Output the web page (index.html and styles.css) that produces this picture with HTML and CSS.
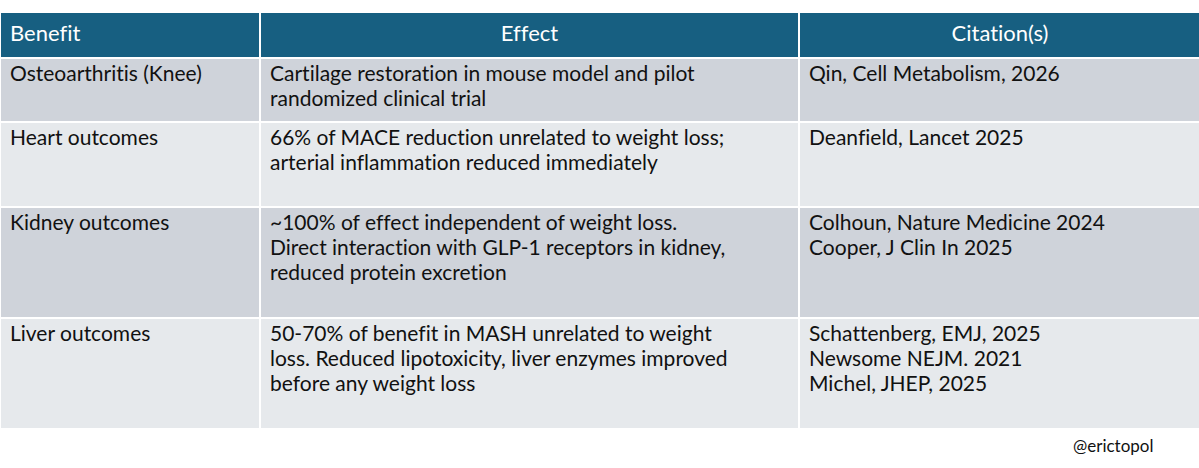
FILE: index.html
```html
<!DOCTYPE html>
<html>
<head>
<meta charset="utf-8">
<link rel="stylesheet" href="styles.css">
</head>
<body>
<div class="table">
  <div class="cell head left">Benefit</div>
  <div class="cell head">Effect</div>
  <div class="cell head">Citation(s)</div>

  <div class="cell dark">Osteoarthritis (Knee)</div>
  <div class="cell dark">Cartilage restoration in mouse model and pilot<br>randomized clinical trial</div>
  <div class="cell dark">Qin, Cell Metabolism, 2026</div>

  <div class="cell light">Heart outcomes</div>
  <div class="cell light">66% of MACE reduction unrelated to weight loss;<br>arterial inflammation reduced immediately</div>
  <div class="cell light">Deanfield, Lancet 2025</div>

  <div class="cell dark">Kidney outcomes</div>
  <div class="cell dark">~100% of effect independent of weight loss.<br>Direct interaction with GLP-1 receptors in kidney,<br>reduced protein excretion</div>
  <div class="cell dark">Colhoun, Nature Medicine 2024<br>Cooper, J Clin In 2025</div>

  <div class="cell light">Liver outcomes</div>
  <div class="cell light">50-70% of benefit in MASH unrelated to weight<br>loss. Reduced lipotoxicity, liver enzymes improved<br>before any weight loss</div>
  <div class="cell light">Schattenberg, EMJ, 2025<br>Newsome NEJM. 2021<br>Michel, JHEP, 2025</div>
</div>
<div class="credit">@erictopol</div>
</body>
</html>
```

FILE: styles.css
```css
html, body {
  margin: 0;
  padding: 0;
  background: #ffffff;
}
body {
  font-family: Lato, "Open Sans", sans-serif;
  font-variant-ligatures: none;
  font-feature-settings: "liga" 0, "dlig" 0;
  color: #111111;
  width: 1199px;
  height: 468px;
  overflow: hidden;
}
.table {
  display: grid;
  grid-template-columns: 258px 537px 400px;
  grid-template-rows: 44px 62px 83px 109px 109px;
  column-gap: 2px;
  row-gap: 2px;
  margin: 13px 0 0 1px;
}
.cell {
  font-size: 21px;
  line-height: 25px;
  padding: 1px 9px 0 9px;
}
.head {
  background: #175f81;
  color: #ffffff;
  text-align: center;
  display: flex;
  align-items: center;
  justify-content: center;
  padding: 0 0 5px 0;
  font-size: 22px;
}
.head.left {
  justify-content: flex-start;
  padding-left: 9px;
}
.dark {
  background: #cfd3da;
}
.light {
  background: #e6e9ec;
}
.credit {
  font-size: 17px;
  line-height: 20px;
  margin: 8px 0 0 1073px;
  color: #111111;
}
```
